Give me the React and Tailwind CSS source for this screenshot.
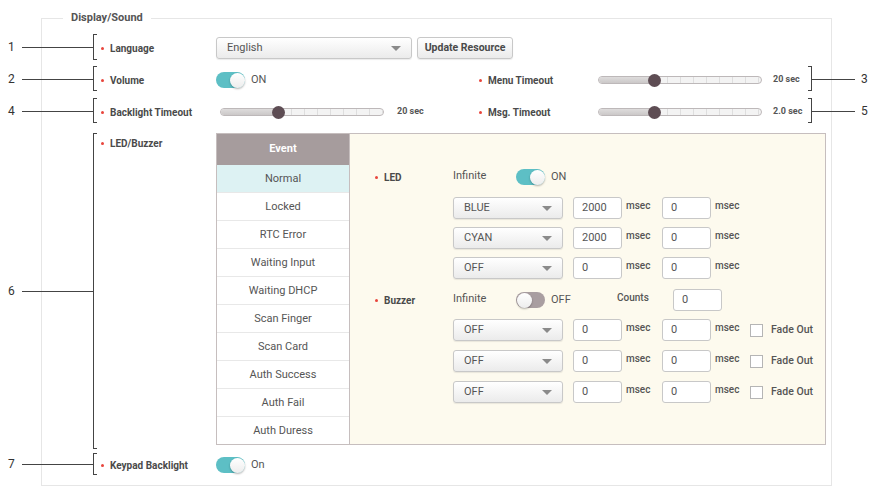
import React from "react";

const EVENTS = [
  "Normal",
  "Locked",
  "RTC Error",
  "Waiting Input",
  "Waiting DHCP",
  "Scan Finger",
  "Scan Card",
  "Auth Success",
  "Auth Fail",
  "Auth Duress",
];

const LED_ROWS = [
  { color: "BLUE", on: "2000", off: "0" },
  { color: "CYAN", on: "2000", off: "0" },
  { color: "OFF", on: "0", off: "0" },
];

const BUZZER_ROWS = [
  { tone: "OFF", on: "0", off: "0" },
  { tone: "OFF", on: "0", off: "0" },
  { tone: "OFF", on: "0", off: "0" },
];

// callouts drawn over the page, like on a manual screenshot
function LeftMark({ n, top, bottom }) {
  const mid = Math.round((top + bottom) / 2);
  return (
    <>
      <span
        className="absolute left-[8px] text-[12px] leading-[14px] text-[#333]"
        style={{ top: mid - 7 }}
      >
        {n}
      </span>
      <div className="absolute left-[22px] w-[71px] h-px bg-[#444]" style={{ top: mid }} />
      <div
        className="absolute left-[93px] w-[4px] border-l border-t border-b border-[#444]"
        style={{ top, height: bottom - top }}
      />
    </>
  );
}

function RightMark({ n, top, bottom }) {
  const mid = Math.round((top + bottom) / 2);
  return (
    <>
      <div
        className="absolute left-[808px] w-[4px] border-r border-t border-b border-[#444]"
        style={{ top, height: bottom - top }}
      />
      <div className="absolute left-[812px] w-[43px] h-px bg-[#444]" style={{ top: mid }} />
      <span
        className="absolute left-[861px] text-[12px] leading-[14px] text-[#333]"
        style={{ top: mid - 7 }}
      >
        {n}
      </span>
    </>
  );
}

function Dot() {
  return <span className="w-[3px] h-[3px] rounded-full bg-[#e8453c] mr-[6px] shrink-0" />;
}

function Label({ children, width }) {
  return (
    <div className={"flex items-center shrink-0 " + width}>
      <Dot />
      <span className="text-[10px] font-bold text-[#4a4a4a]">{children}</span>
    </div>
  );
}

function Toggle({ on }) {
  return (
    <div
      className={
        on
          ? "flex items-center justify-end w-[29px] h-[16px] rounded-full bg-[#5dbfc5] px-[0.5px] shrink-0"
          : "flex items-center justify-start w-[29px] h-[16px] rounded-full bg-[#a99ea1] px-[0.5px] shrink-0"
      }
    >
      <div className="w-[15px] h-[15px] rounded-full bg-linear-to-b from-white to-[#ededed] shadow-[0_1px_2px_rgba(0,0,0,0.3)]" />
    </div>
  );
}

function Caret() {
  return (
    <span className="w-0 h-0 border-l-[5px] border-r-[5px] border-t-[5px] border-l-transparent border-r-transparent border-t-[#8a8a8a]" />
  );
}

function Select({ value, width }) {
  return (
    <div
      className={
        "flex items-center justify-between h-[22px] pl-[10px] pr-[10px] border border-[#c8c8c8] rounded-[3px] bg-linear-to-b from-white to-[#ebebeb] shadow-[0_1px_1px_rgba(0,0,0,0.08)] text-[11px] text-[#555] shrink-0 " +
        width
      }
    >
      <span>{value}</span>
      <Caret />
    </div>
  );
}

function Input({ value }) {
  return (
    <div className="flex items-center h-[22px] w-[49px] pl-[8px] border border-[#c8c8c8] rounded-[3px] bg-white text-[11px] text-[#555] shrink-0">
      {value}
    </div>
  );
}

function Slider({ pos }) {
  const ticks = Array.from({ length: 12 });
  return (
    <div className="relative w-[164px] h-[14px] flex items-center shrink-0">
      <div className="w-full h-[8px] rounded-full border border-[#bdb8b9] bg-[#f3f3f3] flex overflow-hidden">
        <div className="h-full bg-linear-to-b from-[#dedcdc] to-[#cbc8c8]" style={{ width: pos }} />
        <div className="flex-1 flex overflow-hidden">
          {ticks.map((_, i) => (
            <div key={i} className="w-[13px] h-full border-r border-[#dedede] shrink-0" />
          ))}
        </div>
      </div>
      <div
        className="absolute top-[0.5px] w-[13px] h-[13px] rounded-full bg-[#5e4d54]"
        style={{ left: pos - 6 }}
      />
    </div>
  );
}

function Msec({ width }) {
  return (
    <span className={"ml-[4px] self-start leading-[18px] text-[10px] font-medium text-[#555] shrink-0 " + width}>
      msec
    </span>
  );
}

export default function App() {
  return (
    <div className="relative w-[876px] h-[496px] bg-white overflow-hidden font-['Roboto',sans-serif] text-[#555]">
      <fieldset className="ml-[41px] mt-[10px] w-[791px] border border-[#e6e6e6] p-0 m-0 pb-[8px]">
        <legend className="ml-[21px] px-[8px] text-[11px] font-bold leading-[16px] text-[#555]">
          Display/Sound
        </legend>

        <div className="pl-[59px] pt-[6px]">
          {/* Language */}
          <div className="flex items-center h-[32px]">
            <Label width="w-[115px]">Language</Label>
            <Select value="English" width="w-[196px]" />
            <div className="ml-[5px] flex items-center justify-center h-[22px] w-[96px] border border-[#c8c8c8] rounded-[3px] bg-linear-to-b from-white to-[#ebebeb] shadow-[0_1px_1px_rgba(0,0,0,0.08)] text-[10.5px] font-bold text-[#4a4a4a]">
              Update Resource
            </div>
          </div>

          {/* Volume / Menu Timeout */}
          <div className="flex items-center h-[32px]">
            <Label width="w-[115px]">Volume</Label>
            <div className="flex items-center w-[263px]">
              <Toggle on />
              <span className="ml-[6px] text-[11px] text-[#555]">ON</span>
            </div>
            <Label width="w-[119px]">Menu Timeout</Label>
            <Slider pos={56} />
            <span className="ml-[11px] text-[9px] font-bold text-[#555]">20 sec</span>
          </div>

          {/* Backlight / Msg. Timeout */}
          <div className="flex items-center h-[32px]">
            <Label width="w-[115px]">Backlight Timeout</Label>
            <div className="flex items-center w-[263px] pl-[4px]">
              <Slider pos={58} />
              <span className="ml-[13px] text-[9px] font-bold text-[#555]">20 sec</span>
            </div>
            <Label width="w-[119px]">Msg. Timeout</Label>
            <Slider pos={56} />
            <span className="ml-[11px] text-[9px] font-bold text-[#555]">2.0 sec</span>
          </div>

          {/* LED / Buzzer */}
          <div className="flex items-start mt-[5px]">
            <div className="flex items-center h-[20px] w-[115px]">
              <Dot />
              <span className="text-[10px] font-bold text-[#4a4a4a]">LED/Buzzer</span>
            </div>
            <div className="flex">
              <div className="w-[134px] border border-[#c6bebe] bg-white">
                <div className="flex items-center justify-center h-[31px] bg-[#a69c9d] text-[11px] font-bold text-white">
                  Event
                </div>
                {EVENTS.map((e, i) => (
                  <div
                    key={e}
                    className={
                      (i === 0 ? "bg-[#ddf2f3] " : "") +
                      (i < EVENTS.length - 1 ? "border-b border-[#e8e8e8] h-[28px] " : "h-[27px] ") +
                      "flex items-center justify-center pt-[1px] text-[11px] text-[#555]"
                    }
                  >
                    {e}
                  </div>
                ))}
              </div>
              <div className="w-[476px] border border-l-0 border-[#c6bebe] bg-[#fdfaee] pl-[25px] pt-[32px]">
                {/* LED */}
                <div className="flex items-center h-[22px]">
                  <div className="flex items-center w-[78px]">
                    <Dot />
                    <span className="text-[10px] font-bold text-[#4a4a4a]">LED</span>
                  </div>
                  <span className="w-[63px] -mt-[2px] text-[11px] text-[#555]">Infinite</span>
                  <Toggle on />
                  <span className="ml-[6px] text-[11px] text-[#555]">ON</span>
                </div>
                <div className="flex flex-col gap-[8px] mt-[9px] pl-[78px]">
                  {LED_ROWS.map((r, i) => (
                    <div key={i} className="flex items-center">
                      <Select value={r.color} width="w-[110px]" />
                      <div className="ml-[10px]">
                        <Input value={r.on} />
                      </div>
                      <Msec width="w-[36px]" />
                      <Input value={r.off} />
                      <Msec width="w-[35px]" />
                    </div>
                  ))}
                </div>

                {/* Buzzer */}
                <div className="flex items-center h-[22px] mt-[10px]">
                  <div className="flex items-center w-[78px]">
                    <Dot />
                    <span className="text-[10px] font-bold text-[#4a4a4a]">Buzzer</span>
                  </div>
                  <span className="w-[63px] -mt-[2px] text-[11px] text-[#555]">Infinite</span>
                  <Toggle />
                  <span className="ml-[6px] w-[66px] text-[11px] text-[#555]">OFF</span>
                  <span className="w-[56px] self-start leading-[18px] text-[10px] font-medium text-[#555]">Counts</span>
                  <Input value="0" />
                </div>
                <div className="flex flex-col gap-[9px] mt-[8px] pl-[78px] pb-[40px]">
                  {BUZZER_ROWS.map((r, i) => (
                    <div key={i} className="flex items-center">
                      <Select value={r.tone} width="w-[110px]" />
                      <div className="ml-[10px]">
                        <Input value={r.on} />
                      </div>
                      <Msec width="w-[36px]" />
                      <Input value={r.off} />
                      <Msec width="w-[35px]" />
                      <span className="w-[13px] h-[13px] border border-[#b5b5b5] bg-white shrink-0" />
                      <span className="ml-[8px] text-[10.5px] font-medium text-[#555]">Fade Out</span>
                    </div>
                  ))}
                </div>
              </div>
            </div>
          </div>

          {/* Keypad Backlight */}
          <div className="flex items-center h-[24px] mt-[8px]">
            <Label width="w-[115px]">Keypad Backlight</Label>
            <Toggle on />
            <span className="ml-[6px] text-[11px] text-[#555]">On</span>
          </div>
        </div>
      </fieldset>

      <LeftMark n="1" top={34} bottom={60} />
      <LeftMark n="2" top={66} bottom={91} />
      <LeftMark n="4" top={98} bottom={123} />
      <LeftMark n="6" top={133} bottom={449} />
      <LeftMark n="7" top={453} bottom={475} />
      <RightMark n="3" top={66} bottom={91} />
      <RightMark n="5" top={98} bottom={123} />
    </div>
  );
}
